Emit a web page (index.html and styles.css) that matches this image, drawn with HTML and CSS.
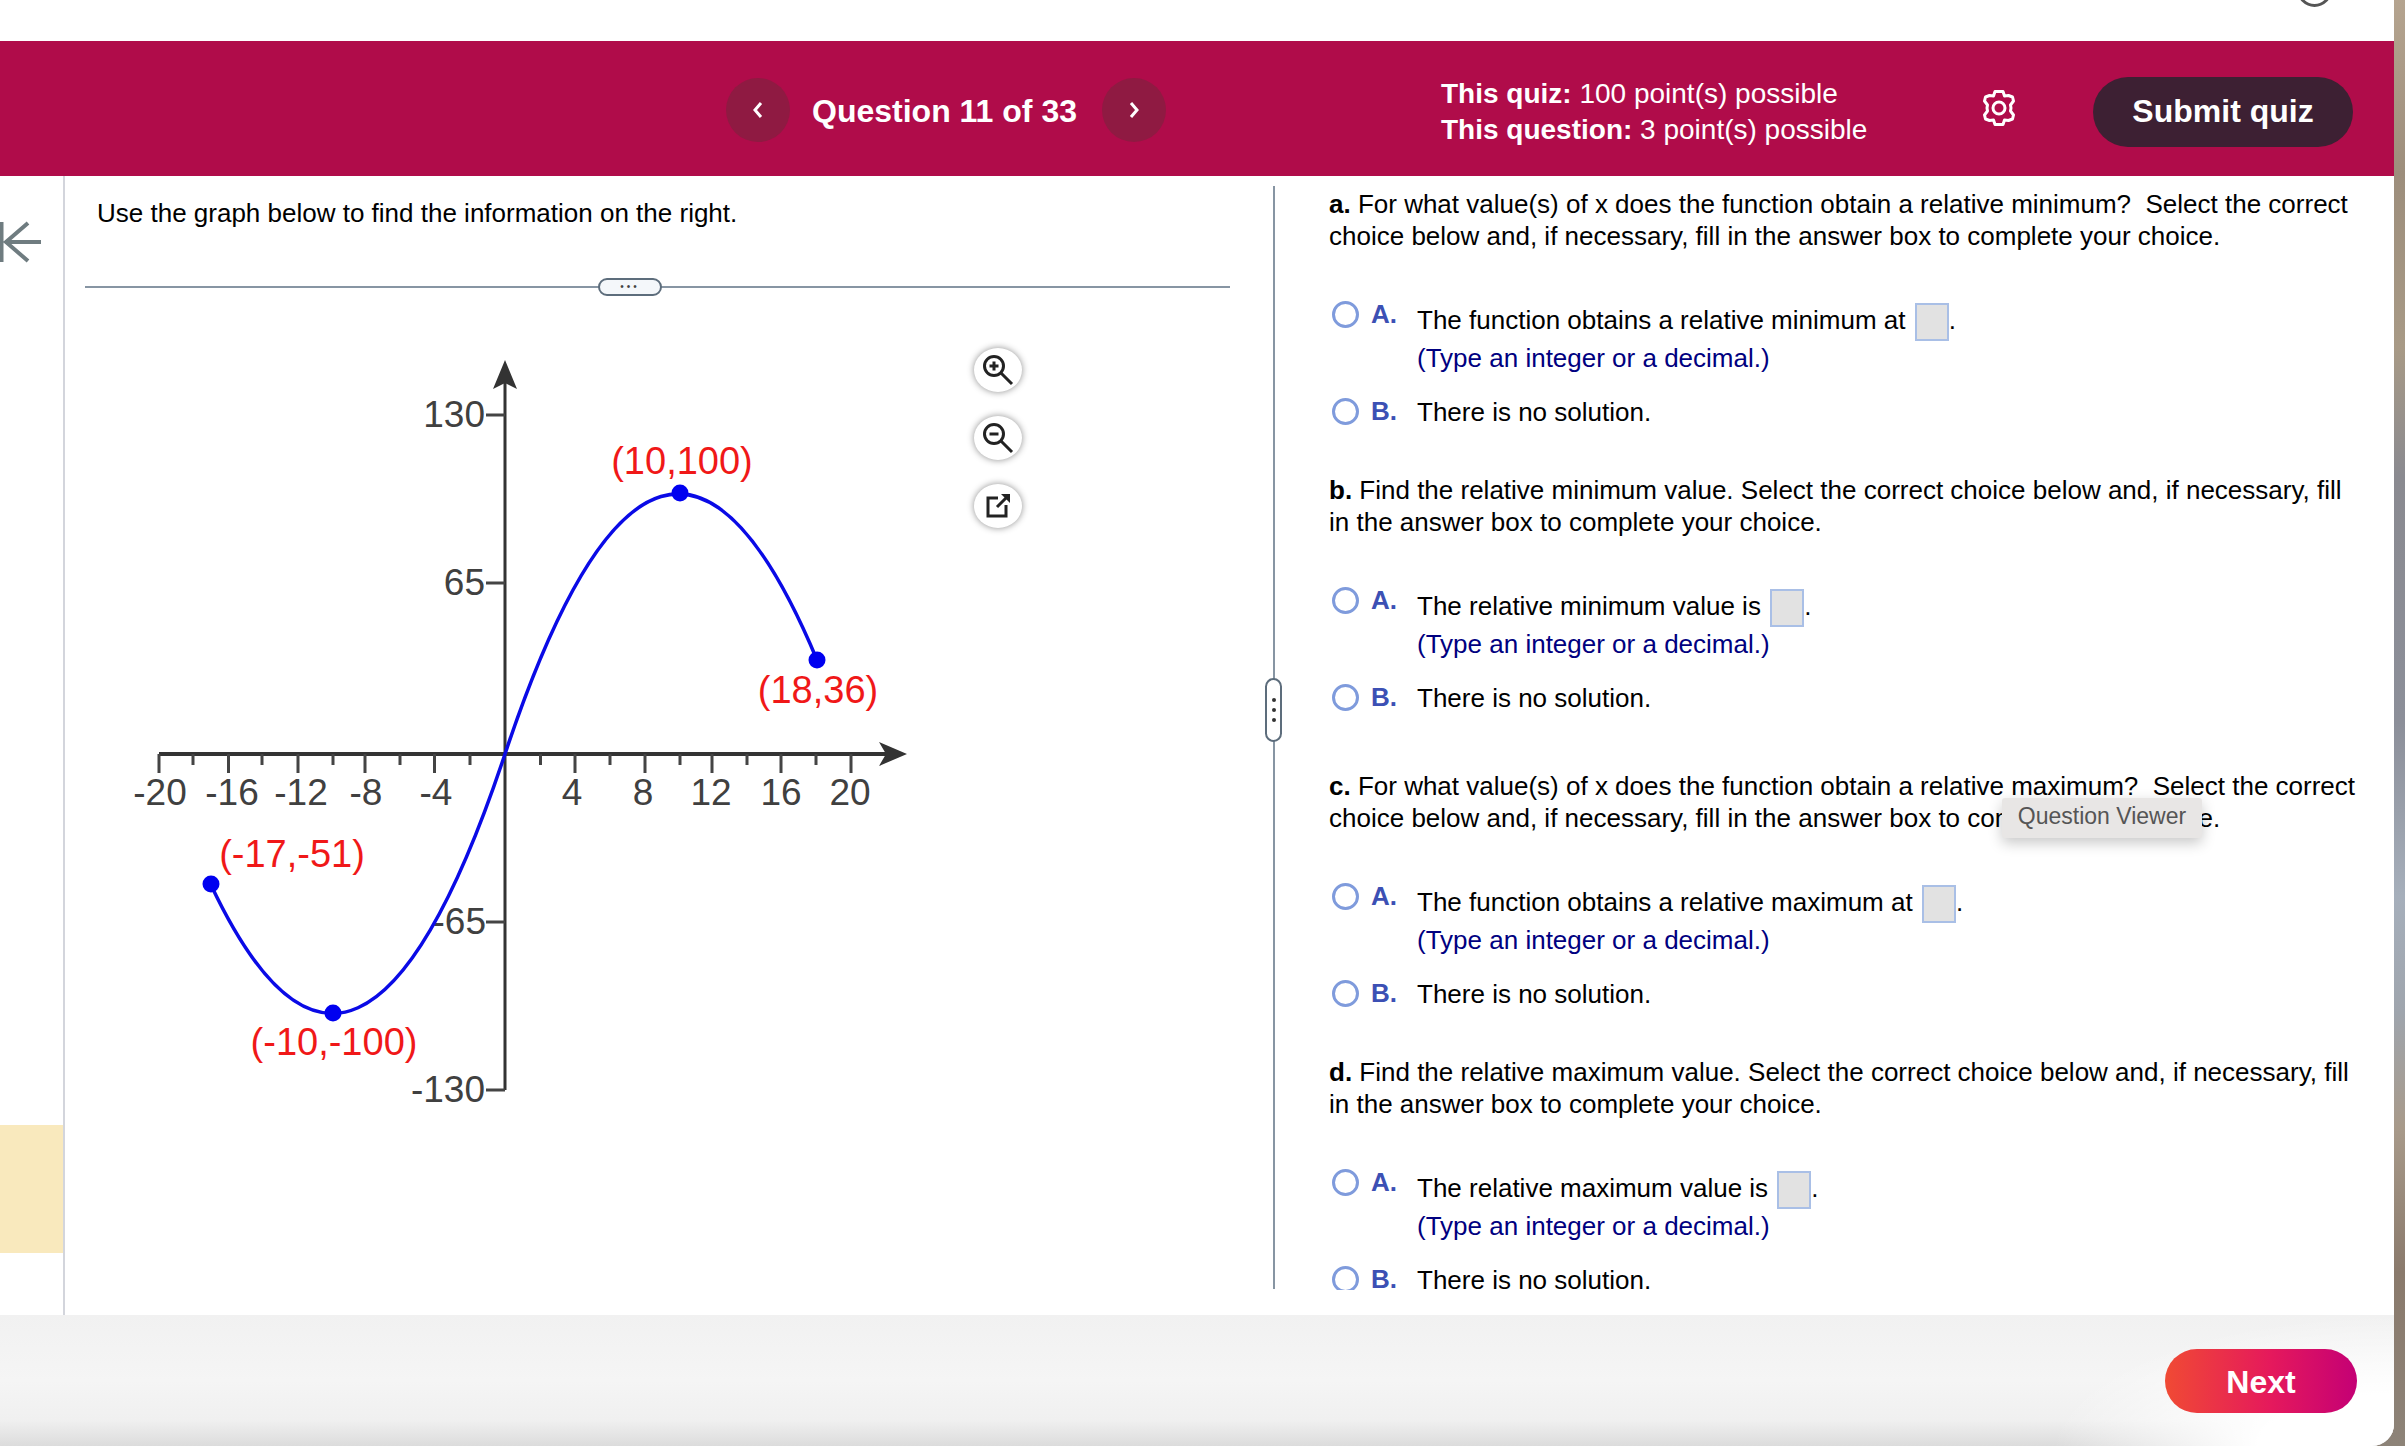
FILE: index.html
```html
<!DOCTYPE html>
<html lang="en">
  <head>
    <meta name="viewport" content="width=device-width" />
    <title>Question 11 of 33</title>
    <link rel="stylesheet" href="styles.css">
  </head>
  <body>
    <div class="window">
      <div class="topbar">
        <span class="account-ring"></span>
      </div>

      <header class="quiz-header">
        <nav class="question-nav">
          <button class="nav-btn" aria-label="Previous">
            <svg width="12" height="18" viewBox="0 0 12 18"><path d="M9 2 3 9l6 7" /></svg>
          </button>
          <span class="question-title">Question 11 of 33</span>
          <button class="nav-btn" aria-label="Next">
            <svg width="12" height="18" viewBox="0 0 12 18"><path d="M3 2l6 7-6 7" /></svg>
          </button>
        </nav>
        <div class="points">
          <div><b>This quiz:</b> 100 point(s) possible</div>
          <div><b>This question:</b> 3 point(s) possible</div>
        </div>
        <svg class="gear" width="36" height="38" viewBox="0 0 36 38">
          <path d="M14 2.500h8l1.500 4.500 4-.500 4 1.500 1 4-3 4 .5 3-.5 3 3 4-1 4-4 1.500-4-.500-1.500 4.500h-8l-1.500-4.500-4 .500-4-1.500-1-4 3-4-.5-3 .5-3-3-4 1-4 4-1.500 4 .500z" />
          <circle cx="18" cy="19" r="6" />
        </svg>
        <button class="submit-btn">Submit quiz</button>
      </header>

      <main class="quiz-body">
        <aside class="rail">
          <svg class="rail-back" width="42" height="42" viewBox="0 0 42 42">
            <path d="M1.500 1v40M28 2 6 21l22 19M6 21h35" />
          </svg>
          <div class="rail-flag"></div>
        </aside>

        <section class="graph-pane">
          <p class="prompt">Use the graph below to find the information on the right.</p>
          <div class="h-split"><span class="h-grip">&bull;&bull;&bull;</span></div>
          <div class="graph-area">
            <svg class="graph" width="830" height="780" viewBox="130 350 830 780">
              <g class="axis">
                <path d="M505 372V1090" />
                <path class="axis-x" d="M159 754H893" />
                <path class="tick" d="M159 754v19M228.500 754v19M298 754v19M365 754v19M434.500 754v19M575 754v19M645 754v19M712 754v19M781 754v19M851 754v19" />
                <path class="tick" d="M193 754v11M262 754v11M333 754v11M400 754v11M470 754v11M540.500 754v11M610 754v11M680 754v11M747 754v11M816 754v11" />
                <path class="tick" d="M486 415h19M486 583h19M486 922h19M486 1090h19" />
                <path class="tip" d="M505 360l12 29-12-6-12 6z" />
                <path class="tip" d="M907 754l-28 12 7-12-7-12z" />
              </g>
              <g class="scale">
                <text x="160" y="805" text-anchor="middle">-20</text>
                <text x="232" y="805" text-anchor="middle">-16</text>
                <text x="301" y="805" text-anchor="middle">-12</text>
                <text x="366" y="805" text-anchor="middle">-8</text>
                <text x="436" y="805" text-anchor="middle">-4</text>
                <text x="572" y="805" text-anchor="middle">4</text>
                <text x="643" y="805" text-anchor="middle">8</text>
                <text x="711" y="805" text-anchor="middle">12</text>
                <text x="781" y="805" text-anchor="middle">16</text>
                <text x="850" y="805" text-anchor="middle">20</text>
                <text x="485" y="427" text-anchor="end">130</text>
                <text x="485" y="595" text-anchor="end">65</text>
                <text x="486" y="934" text-anchor="end">-65</text>
                <text x="485" y="1102" text-anchor="end">-130</text>
              </g>
              <path class="curve" d="M211 885Q358 1196 505 754Q661 286 817 660" />
              <g class="dots">
                <circle cx="211" cy="884" r="8.500" />
                <circle cx="333" cy="1013" r="8.500" />
                <circle cx="680" cy="493" r="8.500" />
                <circle cx="817" cy="660" r="8.500" />
              </g>
              <g class="marks">
                <text x="682" y="474" text-anchor="middle">(10,100)</text>
                <text x="818" y="703" text-anchor="middle">(18,36)</text>
                <text x="292" y="867" text-anchor="middle">(-17,-51)</text>
                <text x="334" y="1055" text-anchor="middle">(-10,-100)</text>
              </g>
            </svg>
            <div class="graph-tools">
              <button class="tool-btn" aria-label="Zoom in">
                <svg width="34" height="34" viewBox="0 0 34 34">
                  <circle cx="13" cy="13" r="9.500" />
                  <path d="M20 20l11 11M8.500 13h9M13 8.500v9" class="thin" />
                </svg>
              </button>
              <button class="tool-btn" aria-label="Zoom out">
                <svg width="34" height="34" viewBox="0 0 34 34">
                  <circle cx="13" cy="13" r="9.500" />
                  <path d="M20 20l11 11M8.500 13h9" class="thin" />
                </svg>
              </button>
              <button class="tool-btn" aria-label="Open">
                <svg width="26" height="26" viewBox="0 0 26 26">
                  <path class="thin" d="M13 5H3v18h18V12M12 14 23 3" />
                  <path class="solid" d="M25 1v9l-9-9z" />
                </svg>
              </button>
            </div>
          </div>
        </section>

        <div class="v-split"><span class="v-grip"><i></i><i></i><i></i></span></div>

        <section class="answer-pane">
          <div class="answer-scroll">
            <div class="part">
              <p class="part-text"><b>a.</b> For what value(s) of x does the function obtain a relative minimum?&nbsp; Select the correct choice below and, if necessary, fill in the answer box to complete your choice.</p>
              <div class="choice">
                <span class="radio"></span><b class="letter">A.</b>
                <div class="choice-text">
                  <div class="line">The function obtains a relative minimum at <span class="blank"></span>.</div>
                  <div class="hint">(Type an integer or a decimal.)</div>
                </div>
              </div>
              <div class="choice choice-b">
                <span class="radio"></span><b class="letter">B.</b>
                <div class="choice-text"><div class="line">There is no solution.</div></div>
              </div>
            </div>

            <div class="part">
              <p class="part-text"><b>b.</b> Find the relative minimum value. Select the correct choice below and, if necessary, fill in the answer box to complete your choice.</p>
              <div class="choice">
                <span class="radio"></span><b class="letter">A.</b>
                <div class="choice-text">
                  <div class="line">The relative minimum value is <span class="blank"></span>.</div>
                  <div class="hint">(Type an integer or a decimal.)</div>
                </div>
              </div>
              <div class="choice choice-b">
                <span class="radio"></span><b class="letter">B.</b>
                <div class="choice-text"><div class="line">There is no solution.</div></div>
              </div>
            </div>

            <div class="part part-wide">
              <p class="part-text"><b>c.</b> For what value(s) of x does the function obtain a relative maximum?&nbsp; Select the correct choice below and, if necessary, fill in the answer box to complete your choice.</p>
              <div class="choice">
                <span class="radio"></span><b class="letter">A.</b>
                <div class="choice-text">
                  <div class="line">The function obtains a relative maximum at <span class="blank"></span>.</div>
                  <div class="hint">(Type an integer or a decimal.)</div>
                </div>
              </div>
              <div class="choice choice-b">
                <span class="radio"></span><b class="letter">B.</b>
                <div class="choice-text"><div class="line">There is no solution.</div></div>
              </div>
            </div>

            <div class="part">
              <p class="part-text"><b>d.</b> Find the relative maximum value. Select the correct choice below and, if necessary, fill in the answer box to complete your choice.</p>
              <div class="choice">
                <span class="radio"></span><b class="letter">A.</b>
                <div class="choice-text">
                  <div class="line">The relative maximum value is <span class="blank"></span>.</div>
                  <div class="hint">(Type an integer or a decimal.)</div>
                </div>
              </div>
              <div class="choice choice-b">
                <span class="radio"></span><b class="letter">B.</b>
                <div class="choice-text"><div class="line">There is no solution.</div></div>
              </div>
            </div>
          </div>
          <span class="tooltip">Question Viewer</span>
        </section>
      </main>

      <footer class="quiz-footer">
        <button class="next-btn">Next</button>
      </footer>
    </div>
  </body>
</html>
```

FILE: styles.css
```css
* {
  box-sizing: border-box;
}

html,
body {
  height: 100%;
}

body {
  margin: 0;
  overflow: hidden;
  font-family: "Liberation Sans", Arial, sans-serif;
  font-size: 26px;
  color: #000;
  /* bit of desktop photo showing past the window */
  background: linear-gradient(180deg, #b5a48f 0%, #9d8e7c 12%, #a89a86 24%, #8a8a90 33%, #8c8f99 50%, #a6afbb 62%, #9fa5ad 70%, #a89a8a 78%, #8a7a6c 88%, #8d8378 100%);
}

button {
  font-family: inherit;
  border: 0;
  padding: 0;
}

.window {
  width: 2394px;
  height: 1446px;
  display: flex;
  flex-direction: column;
  background: #fff;
  border-bottom-right-radius: 22px;
  overflow: hidden;
}

.topbar {
  height: 41px;
  flex: none;
  position: relative;
}

.account-ring {
  position: absolute;
  top: -28px;
  left: 2297px;
  width: 35px;
  height: 35px;
  border: 3px solid #555;
  border-radius: 50%;
}

/* header */
.quiz-header {
  height: 135px;
  flex: none;
  display: flex;
  align-items: center;
  padding-left: 726px;
  background: #b00c4a;
  color: #fff;
}

.question-nav {
  display: flex;
  align-items: center;
  gap: 22px;
  margin-top: 3px;
}

.nav-btn {
  width: 64px;
  height: 64px;
  border-radius: 50%;
  background: #8f1a42;
  display: flex;
  align-items: center;
  justify-content: center;
}

.nav-btn path {
  fill: none;
  stroke: #fff;
  stroke-width: 3;
}

.question-title {
  padding-top: 3px;
  font-size: 32px;
  font-weight: 700;
  width: 268px;
  white-space: nowrap;
}

.points {
  margin-left: 275px;
  font-size: 28px;
  line-height: 36px;
  width: 540px;
  margin-top: 6px;
}

.gear {
  margin-top: -2px;
  flex: none;
}

.gear path,
.gear circle {
  fill: none;
  stroke: #fff;
  stroke-width: 3;
  stroke-linejoin: round;
}

.submit-btn {
  margin-left: 76px;
  margin-top: 6px;
  width: 260px;
  height: 70px;
  border-radius: 35px;
  background: #3d2033;
  color: #fff;
  font-size: 32px;
  font-weight: 700;
}

/* body */
.quiz-body {
  flex: 1;
  display: flex;
  min-height: 0;
}

.rail {
  width: 65px;
  flex: none;
  border-right: 2px solid #d3d5dc;
  position: relative;
}

.rail-back {
  position: absolute;
  top: 45px;
  left: 0;
}

.rail-back path {
  fill: none;
  stroke: #6f7c80;
  stroke-width: 4;
}

.rail-flag {
  position: absolute;
  top: 949px;
  left: 0;
  width: 63px;
  height: 128px;
  background: #f9e9bd;
}

.graph-pane {
  width: 1208px;
  flex: none;
  padding-top: 21px;
}

.prompt {
  margin: 0 0 0 32px;
  line-height: 32px;
}

.h-split {
  margin: 57px 43px 0 20px;
  height: 2px;
  background: #8795a3;
  display: flex;
  align-items: center;
}

.h-grip {
  margin-left: 513px;
  width: 64px;
  height: 18px;
  border: 2px solid #5d6d7c;
  border-radius: 9px;
  background: #f4f7fa;
  color: #444;
  font-size: 10px;
  line-height: 14px;
  letter-spacing: 3px;
  text-align: center;
}

.graph-area {
  display: flex;
  align-items: flex-start;
}

.graph {
  margin-top: 62px;
  margin-left: 65px;
  flex: none;
}

.axis path {
  fill: none;
  stroke: #333;
  stroke-width: 3;
}

.axis .axis-x {
  stroke-width: 4;
}

.axis .tick {
  stroke: #444;
}

.axis .tip {
  fill: #333;
  stroke: none;
}

.scale text {
  font-size: 37px;
  fill: #404040;
}

.marks text {
  font-size: 38px;
  fill: #f01818;
}

.curve {
  fill: none;
  stroke: #0a0ae6;
  stroke-width: 3.500;
}

.dots circle {
  fill: #0000f0;
}

.graph-tools {
  margin-top: 60px;
  margin-left: 14px;
  display: flex;
  flex-direction: column;
  gap: 24px;
}

.tool-btn {
  width: 48px;
  height: 44px;
  border-radius: 50%;
  background: #fff;
  box-shadow: 0 0 7px rgba(0, 0, 0, 0.45);
  display: flex;
  align-items: center;
  justify-content: center;
}

.tool-btn circle {
  fill: none;
  stroke: #222;
  stroke-width: 3;
}

.tool-btn .thin {
  fill: none;
  stroke: #222;
  stroke-width: 3;
}

.tool-btn .solid {
  fill: #222;
}

.v-split {
  width: 2px;
  flex: none;
  background: #8795a3;
  margin-top: 10px;
  margin-bottom: 26px;
  position: relative;
}

.v-grip {
  position: absolute;
  top: 492px;
  left: -8px;
  width: 17px;
  height: 64px;
  border: 2px solid #5d6d7c;
  border-radius: 9px;
  background: #fff;
  display: flex;
  flex-direction: column;
  align-items: center;
  justify-content: center;
  gap: 6px;
}

.v-grip i {
  width: 4px;
  height: 4px;
  border-radius: 50%;
  background: #333;
}

/* answers */
.answer-pane {
  flex: 1;
  position: relative;
  min-width: 0;
}

.answer-scroll {
  height: 1114px;
  overflow: hidden;
  padding: 12px 34px 0 54px;
}

.part {
  margin-bottom: 46px;
}

.part-wide {
  margin-top: 56px;
}

.part-text {
  margin: 0;
  line-height: 32px;
}

.choice {
  display: flex;
  align-items: flex-start;
  margin-top: 49px;
  line-height: 32px;
}

.choice-b {
  margin-top: 24px;
}

.radio {
  width: 27px;
  height: 27px;
  flex: none;
  border: 3px solid #7f9bdc;
  border-radius: 50%;
  margin-left: 3px;
}

.letter {
  width: 46px;
  flex: none;
  margin-left: 12px;
  color: #3c50b4;
  line-height: 27px;
}

.choice .line {
  margin-top: 2px;
}

.choice-b .line {
  margin-top: -2px;
}

.blank {
  display: inline-block;
  vertical-align: middle;
  width: 34px;
  height: 38px;
  margin-left: 2px;
  background: #e2e2e2;
  border: 2px solid #a9bfe6;
}

.hint {
  color: #000080;
  margin-top: 1px;
}

.tooltip {
  position: absolute;
  top: 622px;
  left: 727px;
  width: 200px;
  height: 40px;
  line-height: 36px;
  text-align: center;
  font-size: 23px;
  color: #555;
  background: #e8e6e5;
  border-radius: 3px;
  box-shadow: 0 5px 14px rgba(0, 0, 0, 0.22);
}

/* footer */
.quiz-footer {
  height: 131px;
  flex: none;
  display: flex;
  align-items: flex-start;
  justify-content: flex-end;
  padding: 34px 37px 0 0;
  background:
    radial-gradient(ellipse 340px 130px at 100% 100%, #fff 40%, rgba(255, 255, 255, 0) 100%),
    linear-gradient(180deg, #f1f1f1 0%, #f5f5f5 50%, #f0f0f0 80%, #dcdcdc 100%);
}

.next-btn {
  width: 192px;
  height: 64px;
  padding-top: 2px;
  border-radius: 32px;
  background: linear-gradient(90deg, #f04a34 0%, #e5195c 55%, #c40075 100%);
  color: #fff;
  font-size: 32px;
  font-weight: 700;
}
```
